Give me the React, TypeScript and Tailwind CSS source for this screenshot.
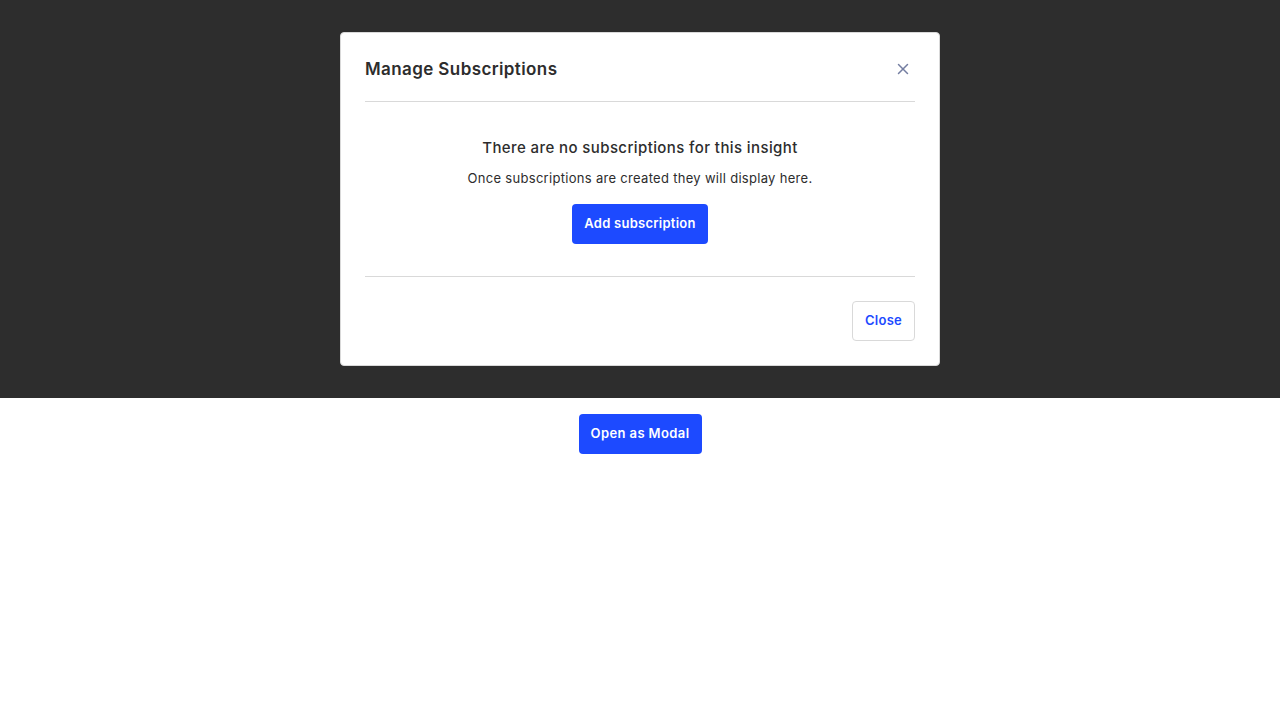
import { X } from "lucide-react";

export default function App() {
  return (
    <div className="min-h-screen bg-white font-['Inter',sans-serif] text-[#2d2d2d]">
      <div className="flex justify-center bg-[#2d2d2d] py-8">
        <div className="w-[600px] rounded border border-[#d9d9d9] bg-white px-6 pb-6 pt-6">
          <div className="flex items-center justify-between border-b border-[#d9d9d9] pb-5">
            <h2 className="text-[17px] font-semibold leading-6 tracking-[0.4px]">Manage Subscriptions</h2>
            <button type="button" aria-label="Close" className="flex h-6 w-6 items-center justify-center text-[#747ea1]">
              <X size={18} strokeWidth={2} />
            </button>
          </div>

          <div className="flex flex-col items-center border-b border-[#d9d9d9] pb-8 pt-[34px]">
            <p className="text-[15px] font-medium leading-6 tracking-[0.4px]">There are no subscriptions for this insight</p>
            <p className="mt-2 text-[13px] leading-5 tracking-[0.3px]">Once subscriptions are created they will display here.</p>
            <button
              type="button"
              className="mt-4 h-10 rounded bg-[#1d4aff] px-3 text-[13px] font-semibold tracking-[0.25px] text-white"
            >
              Add subscription
            </button>
          </div>

          <div className="flex justify-end pt-6">
            <button
              type="button"
              className="h-10 rounded border border-[#d9d9d9] bg-white px-3 text-[13px] font-semibold tracking-[0.25px] text-[#1d4aff]"
            >
              Close
            </button>
          </div>
        </div>
      </div>

      <div className="flex justify-center pt-4">
        <button
          type="button"
          className="h-10 rounded bg-[#1d4aff] px-3 text-[13px] font-semibold tracking-[0.4px] text-white"
        >
          Open as Modal
        </button>
      </div>
    </div>
  );
}
